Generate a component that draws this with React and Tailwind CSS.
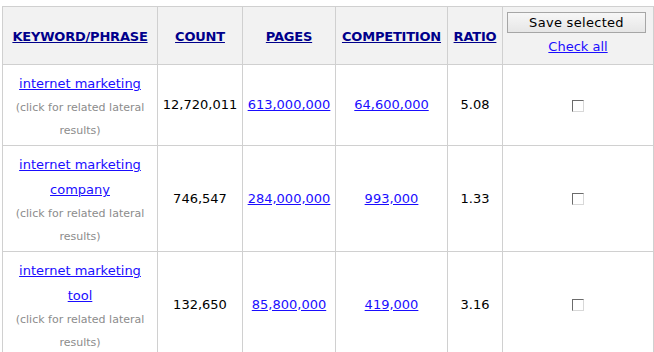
import React from 'react';

const rows = [
  { kw: ['internet marketing'], count: '12,720,011', pages: '613,000,000', comp: '64,600,000', ratio: '5.08' },
  { kw: ['internet marketing', 'company'], count: '746,547', pages: '284,000,000', comp: '993,000', ratio: '1.33' },
  { kw: ['internet marketing', 'tool'], count: '132,650', pages: '85,800,000', comp: '419,000', ratio: '3.16' },
];

const th = 'border border-[#d0d0d0] bg-[#f2f2f2] text-center align-middle p-0 pt-[3px]';
const td = 'border border-[#d0d0d0] text-center align-middle p-0';
const headLink = 'text-[#00008b] underline font-bold text-[13px] tracking-[-0.2px]';
const link = 'text-[#1a0dff] underline';

const Checkbox = () => (
  <span className="inline-block w-[12px] h-[12px] border border-t-[#6b6b6b] border-l-[#6b6b6b] border-b-[#d8d8d8] border-r-[#d8d8d8] bg-white align-middle" />
);

export default function App() {
  return (
    <div className="w-[654px] h-[352px] bg-white overflow-hidden pt-[6px] pl-[2px]" style={{ fontFamily: '"DejaVu Sans", Verdana, sans-serif' }}>
      <table className="table-fixed border-collapse w-[651px] text-[13px] text-black">
        <colgroup>
          <col className="w-[155px]" />
          <col className="w-[85px]" />
          <col className="w-[93px]" />
          <col className="w-[112px]" />
          <col className="w-[55px]" />
          <col className="w-[151px]" />
        </colgroup>
        <thead>
          <tr className="h-[58px]">
            <th className={th}><a href="#" className={headLink}>KEYWORD/PHRASE</a></th>
            <th className={th}><a href="#" className={headLink}>COUNT</a></th>
            <th className={th}><a href="#" className={headLink}>PAGES</a></th>
            <th className={th}><a href="#" className={headLink}>COMPETITION</a></th>
            <th className={th}><a href="#" className={headLink}>RATIO</a></th>
            <th className="border border-[#d0d0d0] bg-[#f2f2f2] align-top p-0">
              <div className="flex flex-col items-center pt-[5px] pb-[7px]">
                <button className="self-start ml-[4px] w-[139px] h-[21px] border border-[#a6a6a6] bg-gradient-to-b from-[#f7f7f7] to-[#e6e6e6] text-[13px] font-normal text-black leading-none tracking-[0.3px]">
                  Save selected
                </button>
                <a href="#" className={`${link} font-normal text-[13px] mt-[5px] leading-[18px]`}>Check all</a>
              </div>
            </th>
          </tr>
        </thead>
        <tbody>
          {rows.map((r, i) => (
            <tr key={i}>
              <td className={`${td} pt-[6px] pb-[3px]`}>
                {r.kw.map((k, j) => (
                  <div key={j} className="leading-[25px]">
                    <a href="#" className={link}>{k}</a>
                  </div>
                ))}
                <div className="text-[11px] text-[#8c8c8c] leading-[23px] px-[6px]">(click for related lateral results)</div>
              </td>
              <td className={td}>{r.count}</td>
              <td className={td}><a href="#" className={link}>{r.pages}</a></td>
              <td className={td}><a href="#" className={link}>{r.comp}</a></td>
              <td className={td}>{r.ratio}</td>
              <td className={td}><Checkbox /></td>
            </tr>
          ))}
        </tbody>
      </table>
    </div>
  );
}
